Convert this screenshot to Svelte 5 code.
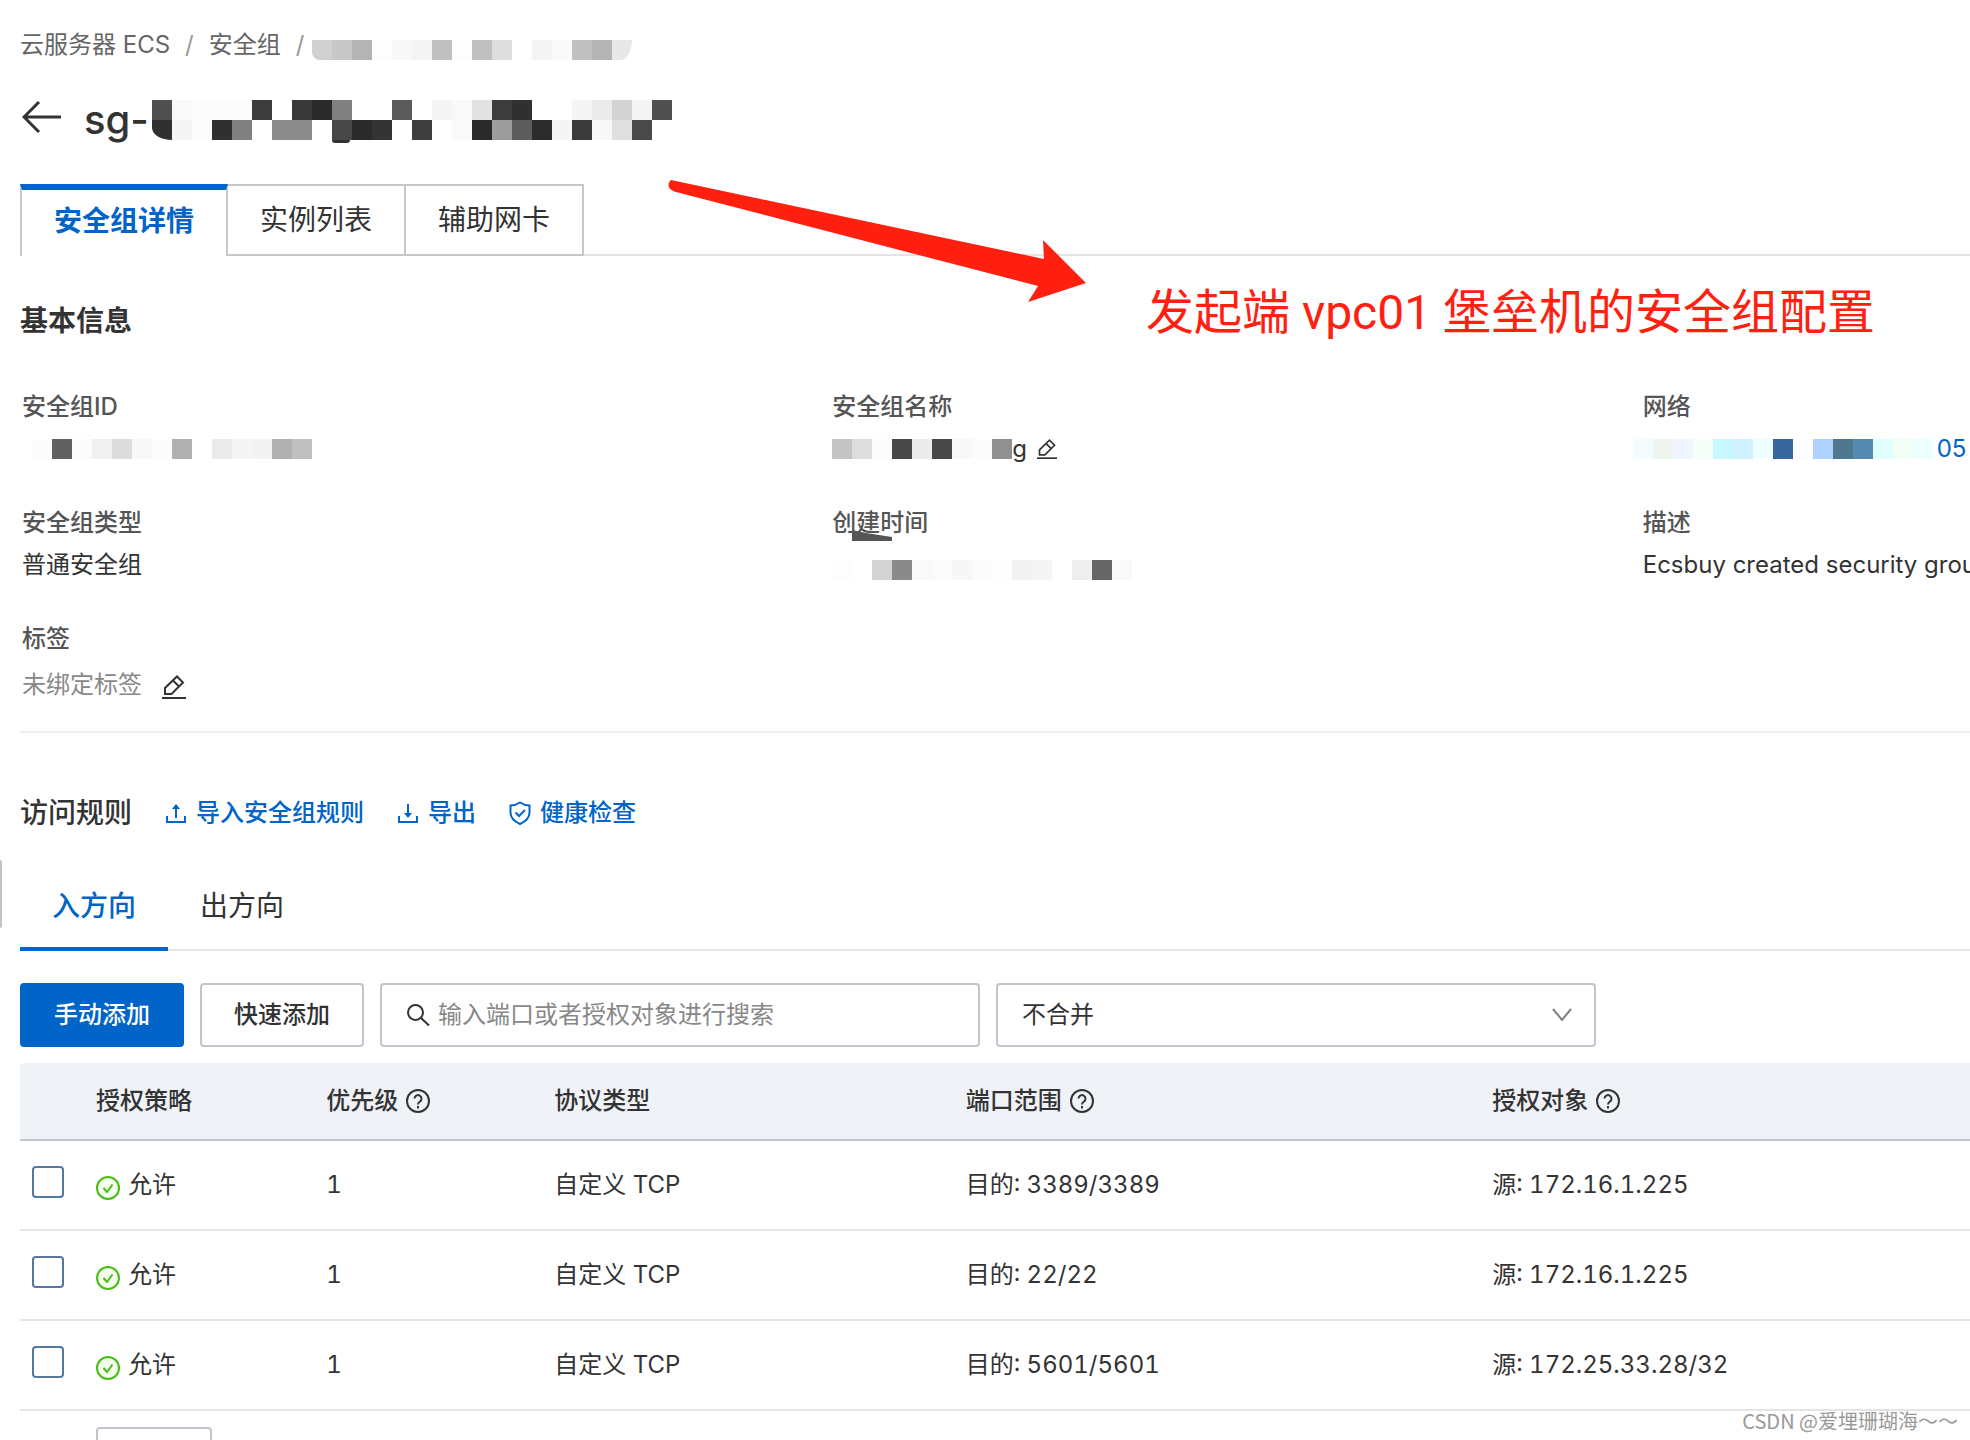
<script>
  const crumbMask = [['transparent', '#d1d1d1', '#c8c8c8', '#b4b4b4', '#fdfdfd', '#f8f8f8', '#f4f4f4', '#c0c0c0', '#fdfdfd', '#c0c0c0', '#dddddd', '#ffffff', '#f4f4f4', '#fafafa', '#c0c0c0', '#b4b4b4', '#e8e8e8']];

  const titleMask = [
    ['#505050', '#f9f9f9', '#fbfbfb', '#fbfbfb', '#fbfbfb', '#3c3c3c', '#ffffff', '#383838', '#2a2a2a', '#808080', '#ffffff', '#ffffff', '#5a5a5a', '#ffffff', '#f5f5f5', '#f9f9f9', '#e2e2e2', '#3c3c3c', '#303030', '#ffffff', '#ffffff', '#f5f5f5', '#ebebeb', '#d3d3d3', '#f4f4f4', '#505050'],
    ['#303030', '#f5f5f5', '#fbfbfb', '#303030', '#808080', '#ffffff', '#8c8c8c', '#8c8c8c', '#ffffff', '#484848', '#2a2a2a', '#343434', '#ffffff', '#3e3e3e', '#ffffff', '#fafafa', '#2a2a2a', '#9c9c9c', '#5c5c5c', '#2c2c2c', '#f5f5f5', '#3a3a3a', '#f8f8f8', '#dfdfdf', '#4a4a4a', '#ffffff']
  ];

  const idMask = [['#fcfcfc', '#606060', '#fbfbfb', '#f0f0f0', '#dcdcdc', '#f8f8f8', '#fcfcfc', '#b0b0b0', '#ffffff', '#ebebeb', '#f5f5f5', '#f3f3f3', '#b0b0b0', '#c0c0c0']];
  const nameMask = [['#c4c4c4', '#dddddd', '#fbfbfb', '#484848', '#ebebeb', '#484848', '#f8f8f8', '#fcfcfc', '#909090']];
  const timeMask = [['#fdfdfd', '#ffffff', '#d4d4d4', '#8a8a8a', '#f9f9f9', '#fbfbfb', '#f7f7f7', '#fbfbfb', '#fefefe', '#f2f2f2', '#f5f5f5', '#ffffff', '#efefef', '#666666', '#f9f9f9']];
  const vpcMask = [['#f3fdff', '#eff4ee', '#eff6ff', '#f3fff9', '#c8f8ff', '#d2f1ff', '#efffff', '#36669b', '#fdfcff', '#b0d2ff', '#4e7890', '#568ab0', '#e2ffff', '#f2fff5', '#ebffff']];

  const tabs = ['安全组详情', '实例列表', '辅助网卡'];
  const directions = ['入方向', '出方向'];

  const columns = [
    { title: '授权策略' },
    { title: '优先级', help: true },
    { title: '协议类型' },
    { title: '端口范围', help: true },
    { title: '授权对象', help: true }
  ];

  const rules = [
    { policy: '允许', priority: 1, protocol: '自定义 TCP', port: '目的: 3389/3389', source: '源: 172.16.1.225' },
    { policy: '允许', priority: 1, protocol: '自定义 TCP', port: '目的: 22/22', source: '源: 172.16.1.225' },
    { policy: '允许', priority: 1, protocol: '自定义 TCP', port: '目的: 5601/5601', source: '源: 172.25.33.28/32' }
  ];

  let tab = $state(0);
  let direction = $state(0);
  let keyword = $state('');
</script>

{#snippet mosaic(rows, kind)}
  <span class="mosaic {kind}" aria-hidden="true">
    {#each rows as row}
      <span class="mosaic-row">
        {#each row as color}
          <i style="background: {color}"></i>
        {/each}
      </span>
    {/each}
  </span>
{/snippet}

{#snippet pencil()}
  <svg viewBox="0 0 24 24" fill="none" stroke="currentColor" stroke-width="2">
    <path d="M3 19v-6L15 1.500l6 6L9.500 19z M11 5.500l6 6" />
    <path d="M0 23h24" />
  </svg>
{/snippet}

<div class="page">
  <nav class="crumbs">
    <a href="#ecs">云服务器 ECS</a>
    <span class="slash">/</span>
    <a href="#groups">安全组</a>
    <span class="slash last">/</span>
    {@render mosaic(crumbMask, 'crumb-mask')}
  </nav>

  <header class="title">
    <button class="back" aria-label="返回">
      <svg viewBox="0 0 40 32" fill="none" stroke="currentColor" stroke-width="3">
        <path d="M39 16H2 M17 1L2 16l15 15" />
      </svg>
    </button>
    <h1>sg-</h1>
    {@render mosaic(titleMask, 'title-mask')}
  </header>

  <div class="tabs" role="tablist">
    {#each tabs as name, i}
      <button role="tab" aria-selected={tab === i} class:active={tab === i} onclick={() => (tab = i)}>{name}</button>
    {/each}
    <span class="rest"></span>
  </div>

  <h2 class="info-title">基本信息</h2>

  <dl class="info">
    <div>
      <dt>安全组ID</dt>
      <dd>{@render mosaic(idMask, 'id-mask')}</dd>
    </div>
    <div>
      <dt>安全组名称</dt>
      <dd>
        {@render mosaic(nameMask, '')}g
        <button class="edit small" aria-label="编辑名称">{@render pencil()}</button>
      </dd>
    </div>
    <div>
      <dt>网络</dt>
      <dd>{@render mosaic(vpcMask, 'vpc-mask')}<a href="#vpc">05</a></dd>
    </div>
    <div>
      <dt>安全组类型</dt>
      <dd>普通安全组</dd>
    </div>
    <div>
      <dt class="smeared">
        创建时间
        <svg class="smear" viewBox="0 0 80 12" aria-hidden="true"><path d="M0 1L14 4L40 8v4H0z" fill="#555" /></svg>
      </dt>
      <dd>{@render mosaic(timeMask, 'low')}</dd>
    </div>
    <div>
      <dt>描述</dt>
      <dd>Ecsbuy created security grou</dd>
    </div>
    <div>
      <dt>标签</dt>
      <dd class="tags">未绑定标签 <button class="edit" aria-label="编辑标签">{@render pencil()}</button></dd>
    </div>
  </dl>

  <section class="rules">
    <div class="rules-head">
      <h2>访问规则</h2>
      <button class="link">
        <svg viewBox="0 0 24 24" fill="none" stroke="currentColor" stroke-width="2"><path d="M3 15v6h18v-6 M12 17V4" /><path d="M8 8l4-5 4 5z" fill="currentColor" stroke="none" /></svg>
        导入安全组规则
      </button>
      <button class="link">
        <svg viewBox="0 0 24 24" fill="none" stroke="currentColor" stroke-width="2"><path d="M3 15v6h18v-6 M12 3v12" /><path d="M8 12l4 5 4-5z" fill="currentColor" stroke="none" /></svg>
        导出
      </button>
      <button class="link">
        <svg viewBox="0 0 24 24" fill="none" stroke="currentColor" stroke-width="2"><path d="M12 1.500c3 2 6 3 9.500 3v7c0 5-4 9-9.500 11.500C6.500 20.500 2.500 16.500 2.500 11.500v-7C6 4.500 9 3.500 12 1.500z M7.500 11.500l3.500 3.500 6-6" /></svg>
        健康检查
      </button>
    </div>

    <div class="directions" role="tablist">
      {#each directions as name, i}
        <button role="tab" aria-selected={direction === i} class:active={direction === i} onclick={() => (direction = i)}>{name}</button>
      {/each}
    </div>

    <div class="toolbar">
      <button class="btn primary">手动添加</button>
      <button class="btn">快速添加</button>
      <label class="field search">
        <svg viewBox="0 0 24 24" fill="none" stroke="currentColor" stroke-width="2"><circle cx="9.500" cy="9.500" r="7.500" /><path d="M15 15l8 7.500" /></svg>
        <input type="text" aria-label="搜索" placeholder="输入端口或者授权对象进行搜索" bind:value={keyword} />
      </label>
      <div class="field picker">
        <select aria-label="合并方式">
          <option>不合并</option>
        </select>
        <svg viewBox="0 0 20 14" fill="none" stroke="currentColor" stroke-width="2"><path d="M1 1l9 11 9-11" /></svg>
      </div>
    </div>

    <table>
      <thead>
        <tr>
          <th class="check"></th>
          {#each columns as column}
            <th>
              <span class="cell">
                {column.title}
                {#if column.help}
                  <svg viewBox="0 0 24 24" fill="none" stroke="currentColor" stroke-width="2">
                    <circle cx="12" cy="12" r="11" />
                    <path d="M8.500 9.500a3.500 3.500 0 1 1 5.500 3c-1.500 1-2 1.500-2 3 M12 17v2.500" />
                  </svg>
                {/if}
              </span>
            </th>
          {/each}
        </tr>
      </thead>
      <tbody>
        {#each rules as rule}
          <tr>
            <td class="check"><input type="checkbox" aria-label="选择规则" /></td>
            <td>
              <span class="cell allow">
                <svg viewBox="0 0 24 24" fill="#f6ffed" stroke="#46bc15" stroke-width="2">
                  <circle cx="12" cy="12" r="11" />
                  <path d="M7.500 12l3.500 4 5.500-7.500" fill="none" />
                </svg>
                {rule.policy}
              </span>
            </td>
            <td>{rule.priority}</td>
            <td>{rule.protocol}</td>
            <td>{rule.port}</td>
            <td>{rule.source}</td>
          </tr>
        {/each}
      </tbody>
    </table>

    <div class="batch">
      <button class="btn" aria-label="批量操作"></button>
    </div>
  </section>

  <span class="handle"></span>

  <svg class="arrow" viewBox="0 0 420 124" aria-hidden="true">
    <path d="M4 0L377 79L376 60L419 103L361 122L371 106L9 12C2 10 -1 5 4 0z" fill="#ff2010" />
  </svg>
  <p class="note">发起端 vpc01 堡垒机的安全组配置</p>
  <span class="watermark">CSDN @爱埋珊瑚海～～</span>
</div>

<style>
  :global(body) {
    background: #ffffff;
  }

  .page {
    position: relative;
    box-sizing: border-box;
    height: 100vh;
    padding: 27px 0 0 20px;
    overflow: hidden;
    font-family: Inter, 'Noto Sans CJK SC', sans-serif;
    font-size: 24px;
    line-height: 36px;
    color: #333333;
    background: #ffffff;
  }

  button,
  input,
  select {
    margin: 0;
    padding: 0;
    border: 0;
    background: none;
    font: inherit;
    color: inherit;
  }

  button {
    cursor: pointer;
  }

  a {
    color: #0064c8;
    text-decoration: none;
  }

  h1,
  h2,
  p,
  dl,
  dd {
    margin: 0;
  }

  svg {
    flex: none;
  }

  .mosaic {
    display: inline-flex;
    flex-direction: column;
    flex: none;
  }

  .mosaic-row {
    display: flex;
  }

  .mosaic i {
    width: 20px;
    height: 20px;
  }

  .crumbs {
    display: flex;
    height: 36px;
  }

  .crumbs a {
    color: #666666;
  }

  .slash {
    margin: 0 15px;
    color: #999999;
  }

  .slash.last {
    margin-right: 0;
  }

  .crumb-mask {
    align-self: flex-end;
    margin: 0 0 3px -12px;
  }

  .crumb-mask i:nth-child(2) {
    border-bottom-left-radius: 8px;
  }

  .crumb-mask i:last-child {
    border-bottom-right-radius: 12px 20px;
  }

  .title {
    display: flex;
    align-items: center;
    height: 48px;
    margin-top: 33px;
  }

  .back {
    display: flex;
    margin: 0 22px 6px 2px;
  }

  .back svg {
    width: 40px;
    height: 32px;
  }

  h1 {
    width: 68px;
    font-size: 40px;
    line-height: 48px;
    font-weight: 500;
  }

  .title-mask {
    position: relative;
  }

  .title-mask .mosaic-row:last-child i:first-child {
    border-bottom-left-radius: 20px 12px;
  }

  /* descender left showing below the mask */
  .title-mask::after {
    content: '';
    position: absolute;
    left: 180px;
    top: 40px;
    width: 18px;
    height: 3px;
    border-radius: 0 0 9px 9px;
    background: #333333;
  }

  .tabs {
    display: flex;
    height: 72px;
    margin-top: 40px;
    font-size: 28px;
  }

  .tabs button {
    padding: 0 32px;
    border: 2px solid #c8c8c8;
    border-left-width: 0;
  }

  .tabs button.active {
    padding-bottom: 4px;
    border-top: 6px solid #0064c8;
    border-bottom-width: 0;
    border-left-width: 2px;
    color: #0064c8;
    font-weight: 700;
  }

  .rest {
    flex: 1;
    border-bottom: 2px solid #e4e4e4;
  }

  h2 {
    font-size: 28px;
    line-height: 40px;
    font-weight: 500;
  }

  .info-title {
    margin-top: 45px;
    font-weight: 600;
  }

  .info {
    display: grid;
    grid-template-columns: 41.6% 41.6% 1fr;
    row-gap: 38px;
    margin-top: 48px;
    padding: 0 0 24px 2px;
    border-bottom: 2px solid #eeeeee;
  }

  .info > div {
    min-width: 0;
  }

  dt {
    color: #555555;
    font-weight: 500;
  }

  dd {
    display: flex;
    align-items: center;
    height: 36px;
    margin-top: 6px;
    white-space: nowrap;
  }

  .info .tags {
    height: 44px;
    gap: 20px;
    color: #888888;
  }

  .tags .edit {
    margin-top: 4px;
  }

  .id-mask {
    margin-left: 10px;
  }

  .vpc-mask {
    margin: 0 4px 0 -10px;
  }

  .low {
    align-self: flex-end;
    margin-bottom: 3px;
  }

  .smeared {
    position: relative;
  }

  .smear {
    position: absolute;
    left: 20px;
    bottom: 0;
    width: 80px;
    height: 12px;
  }

  .edit {
    display: flex;
    color: #333333;
  }

  .edit svg {
    width: 24px;
    height: 24px;
  }

  .edit.small {
    margin-left: 10px;
  }

  .edit.small svg {
    width: 20px;
    height: 20px;
  }

  .rules-head {
    display: flex;
    align-items: center;
    gap: 32px;
    margin-top: 60px;
  }

  .link {
    display: flex;
    align-items: center;
    gap: 8px;
    color: #0064c8;
    font-weight: 500;
  }

  .link svg {
    width: 24px;
    height: 24px;
  }

  .directions {
    display: flex;
    height: 90px;
    box-sizing: border-box;
    margin-top: 28px;
    border-bottom: 2px solid #e4e4e4;
    font-size: 28px;
  }

  .directions button {
    height: 90px;
    padding: 0 32px;
    border-top: 4px solid transparent;
    border-bottom: 4px solid transparent;
  }

  .directions .active {
    border-bottom-color: #0064c8;
    color: #0064c8;
    font-weight: 500;
  }

  .toolbar {
    display: flex;
    gap: 16px;
    margin-top: 32px;
  }

  .btn {
    box-sizing: border-box;
    height: 64px;
    padding: 0 32px;
    border: 2px solid #c0c6cc;
    border-radius: 4px;
    background: #ffffff;
    font-weight: 500;
  }

  .btn.primary {
    border-color: #0064c8;
    background: #0064c8;
    color: #ffffff;
  }

  .field {
    display: flex;
    align-items: center;
    flex: 0 1 600px;
    box-sizing: border-box;
    height: 64px;
    padding: 0 22px 0 24px;
    border: 2px solid #c0c6cc;
    border-radius: 4px;
  }

  .search {
    gap: 8px;
  }

  .search svg {
    width: 24px;
    height: 24px;
  }

  .search input {
    flex: 1;
    min-width: 0;
    outline: none;
  }

  .search input::placeholder {
    color: #888888;
    opacity: 1;
  }

  .picker select {
    flex: 1;
    appearance: none;
    outline: none;
  }

  .picker svg {
    width: 20px;
    height: 14px;
    color: #808080;
  }

  table {
    width: 100%;
    margin-top: 16px;
    border-collapse: separate;
    border-spacing: 0;
    table-layout: fixed;
    font-variant-numeric: tabular-nums;
  }

  th,
  td {
    height: 88px;
    padding: 0;
    border-bottom: 2px solid #e4e4e4;
    text-align: left;
    font-weight: 400;
  }

  th {
    width: 11.7%;
    height: 76px;
    border-color: #c0c6cc;
    background: #eff2f7;
    font-weight: 500;
  }

  th:first-child {
    width: 3.9%;
    border-top-left-radius: 4px;
  }

  th:nth-child(2) {
    width: 11.8%;
  }

  th:nth-child(4) {
    width: 21.1%;
  }

  th:nth-child(5) {
    width: 27%;
  }

  th:last-child {
    width: auto;
  }

  .cell {
    display: flex;
    align-items: center;
    gap: 8px;
  }

  .cell svg {
    width: 24px;
    height: 24px;
  }

  .allow svg {
    margin-top: 6px;
  }

  .check input {
    display: block;
    box-sizing: border-box;
    width: 32px;
    height: 32px;
    margin: 0 0 6px 12px;
    appearance: none;
    border: 2px solid #55779e;
    border-radius: 4px;
  }

  .batch {
    padding: 16px 0 0 76px;
  }

  .batch .btn {
    width: 116px;
  }

  .handle {
    position: absolute;
    left: 0;
    top: 860px;
    width: 2px;
    height: 68px;
    border-radius: 0 4px 4px 0;
    background: #c4c4c4;
  }

  .arrow {
    position: absolute;
    left: 667px;
    top: 180px;
    width: 420px;
    height: 124px;
  }

  .note {
    position: absolute;
    left: 1146px;
    top: 281px;
    font-family: Roboto, 'Noto Sans CJK SC', sans-serif;
    font-size: 48px;
    line-height: 64px;
    color: #ff2010;
    white-space: nowrap;
  }

  .watermark {
    position: absolute;
    right: 12px;
    bottom: 4px;
    font-family: 'Noto Sans CJK SC', sans-serif;
    font-size: 20px;
    line-height: 30px;
    color: #999999;
    text-shadow: 1px 1px 0 #ffffff;
  }
</style>
